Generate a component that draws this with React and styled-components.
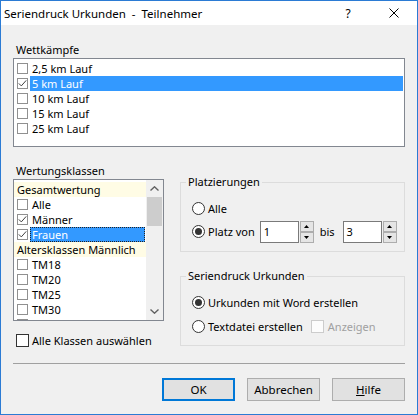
import React from 'react'
import styled, { createGlobalStyle } from 'styled-components'

const GlobalStyle = createGlobalStyle`
  html, body {
    margin: 0;
    padding: 0;
    background: #f0f0f0;
  }
  body {
    font-family: "Noto Sans", "Liberation Sans", sans-serif;
    font-size: 11px;
    color: #000;
  }
`

const wettkaempfe = [
  { label: '2,5 km Lauf' },
  { label: '5 km Lauf', checked: true, selected: true },
  { label: '10 km Lauf' },
  { label: '15 km Lauf' },
  { label: '25 km Lauf' },
]

const klassen = [
  { label: 'Gesamtwertung', header: true },
  { label: 'Alle' },
  { label: 'Männer', checked: true },
  { label: 'Frauen', checked: true, selected: true },
  { label: 'Altersklassen Männlich', header: true },
  { label: 'TM18' },
  { label: 'TM20' },
  { label: 'TM25' },
  { label: 'TM30' },
  { label: 'TM35' },
]

function ListCheck({ checked }) {
  return (
    <CheckIcon width="11" height="11" viewBox="0 0 11 11">
      <rect x="0.5" y="0.5" width="10" height="10" fill="#fff" stroke="#909090" />
      {checked && <path d="M1.8 5.4 L4.3 7.9 L9.2 2.4" fill="none" stroke="#404040" strokeWidth="1" />}
    </CheckIcon>
  )
}

function Radio({ checked }) {
  return (
    <RadioIcon width="13" height="13" viewBox="0 0 13 13">
      <circle cx="6.5" cy="6.5" r="6" fill="#fff" stroke="#333" />
      {checked && <circle cx="6.5" cy="6.5" r="3.5" fill="#333" />}
    </RadioIcon>
  )
}

function Spin({ value }) {
  return (
    <SpinWrap>
      <SpinInput>{value}</SpinInput>
      <SpinButtons>
        <SpinButton>
          <svg width="5" height="3" viewBox="0 0 5 3"><path d="M0 3 L2.5 0 L5 3 Z" fill="#000" /></svg>
        </SpinButton>
        <SpinButton>
          <svg width="5" height="3" viewBox="0 0 5 3"><path d="M0 0 L2.5 3 L5 0 Z" fill="#000" /></svg>
        </SpinButton>
      </SpinButtons>
    </SpinWrap>
  )
}

export default function App() {
  return (
    <>
      <GlobalStyle />
      <Window>
        <TitleBar>
          <Title>Seriendruck Urkunden  -  Teilnehmer</Title>
          <CaptionButton>?</CaptionButton>
          <CaptionButton>
            <svg width="10" height="10" viewBox="0 0 10 10">
              <path d="M0.5 0.5 L9.5 9.5 M9.5 0.5 L0.5 9.5" stroke="#000" strokeWidth="1" />
            </svg>
          </CaptionButton>
        </TitleBar>

        <Content>
          <SectionLabel>Wettkämpfe</SectionLabel>
          <ListBox $height={89}>
            {wettkaempfe.map((item) => (
              <Row key={item.label}>
                <ListCheck checked={item.checked} />
                <ItemText $selected={item.selected}>{item.label}</ItemText>
              </Row>
            ))}
          </ListBox>

          <Lower>
            <LeftColumn>
              <SectionLabel>Wertungsklassen</SectionLabel>
              <ListBox $height={142} $scroll>
                <ListItems>
                  {klassen.map((item) =>
                    item.header ? (
                      <HeaderRow key={item.label}>{item.label}</HeaderRow>
                    ) : (
                      <Row key={item.label}>
                        <ListCheck checked={item.checked} />
                        <ItemText $selected={item.selected} $focus={item.selected}>
                          {item.label}
                        </ItemText>
                      </Row>
                    )
                  )}
                </ListItems>
                <ScrollBar>
                  <ScrollArrow>
                    <svg width="9" height="5" viewBox="0 0 9 5">
                      <path d="M0.5 4.5 L4.5 0.8 L8.5 4.5" fill="none" stroke="#606060" strokeWidth="1.4" />
                    </svg>
                  </ScrollArrow>
                  <ScrollTrack>
                    <Thumb />
                  </ScrollTrack>
                  <ScrollArrow>
                    <svg width="9" height="5" viewBox="0 0 9 5">
                      <path d="M0.5 0.5 L4.5 4.2 L8.5 0.5" fill="none" stroke="#606060" strokeWidth="1.4" />
                    </svg>
                  </ScrollArrow>
                </ScrollBar>
              </ListBox>
              <CheckRow>
                <Box />
                <span>Alle Klassen auswählen</span>
              </CheckRow>
            </LeftColumn>

            <RightColumn>
              <Group $padTop={6} $padBottom={8}>
                <Legend>Platzierungen</Legend>
                <OptionRow $height={23}>
                  <Radio />
                  <OptionText>Alle</OptionText>
                </OptionRow>
                <OptionRow $height={23}>
                  <Radio checked />
                  <OptionText>Platz von</OptionText>
                  <Spin value="1" />
                  <BisText>bis</BisText>
                  <Spin value="3" />
                </OptionRow>
              </Group>

              <Group $padTop={5} $padBottom={7} $gap={16}>
                <Legend>Seriendruck Urkunden</Legend>
                <OptionRow $height={24}>
                  <Radio checked />
                  <OptionText>Urkunden mit Word erstellen</OptionText>
                </OptionRow>
                <OptionRow $height={24}>
                  <Radio />
                  <OptionText>Textdatei erstellen</OptionText>
                  <Box $disabled />
                  <DisabledText>Anzeigen</DisabledText>
                </OptionRow>
              </Group>
            </RightColumn>
          </Lower>

          <Footer>
            <Separator />
            <Buttons>
              <Button $default>OK</Button>
              <Button>Abbrechen</Button>
              <Button><u>H</u>ilfe</Button>
            </Buttons>
          </Footer>
        </Content>
      </Window>
    </>
  )
}

const Window = styled.div`
  width: 418px;
  height: 415px;
  box-sizing: border-box;
  border: 1px solid #2b7bd4;
  background: #f0f0f0;
  display: flex;
  flex-direction: column;
`

const TitleBar = styled.div`
  height: 24px;
  flex: none;
  display: flex;
  align-items: center;
  background: #fff;
  padding-left: 3px;
`

const Title = styled.div`
  flex: 1;
  white-space: pre;
  line-height: 15px;
  font-size: 11.5px;
`

const CaptionButton = styled.div`
  width: 46px;
  height: 24px;
  display: flex;
  align-items: center;
  justify-content: center;
  font-size: 12px;
`

const Content = styled.div`
  flex: 1;
  display: flex;
  flex-direction: column;
  padding: 17px 12px 13px;
`

const SectionLabel = styled.div`
  line-height: 15px;
  height: 15px;
  padding-left: 3px;
  margin-bottom: 1px;
`

const ListBox = styled.div`
  height: ${(p) => p.$height}px;
  box-sizing: border-box;
  border: 1px solid #828790;
  background: #fff;
  padding-top: ${(p) => (p.$scroll ? 0 : 2)}px;
  display: ${(p) => (p.$scroll ? 'flex' : 'block')};
  overflow: hidden;
`

const ListItems = styled.div`
  flex: 1;
  padding-top: 2px;
  overflow: hidden;
`

const Row = styled.div`
  display: flex;
  align-items: center;
  height: 15px;
  padding-left: 3px;
  padding-right: 1px;
`

const HeaderRow = styled.div`
  height: 15px;
  line-height: 15px;
  padding-left: 3px;
  background: #fffce5;
  white-space: nowrap;
`

const CheckIcon = styled.svg`
  flex: none;
  display: block;
`

const ItemText = styled.span`
  flex: 1;
  height: 15px;
  line-height: 15px;
  margin-left: 2px;
  padding-left: 2px;
  white-space: nowrap;
  background: ${(p) => (p.$selected ? '#3399ff' : 'transparent')};
  color: ${(p) => (p.$selected ? '#fff' : '#000')};
  outline: ${(p) => (p.$focus ? '1px dotted #222' : 'none')};
  outline-offset: -1px;
`

const ScrollBar = styled.div`
  width: 17px;
  flex: none;
  display: flex;
  flex-direction: column;
  background: #f0f0f0;
`

const ScrollArrow = styled.div`
  height: 17px;
  display: flex;
  align-items: center;
  justify-content: center;
`

const ScrollTrack = styled.div`
  flex: 1;
  padding: 0 1px;
`

const Thumb = styled.div`
  height: 29px;
  background: #cdcdcd;
`

const Lower = styled.div`
  display: flex;
  gap: 16px;
  margin-top: 16px;
`

const LeftColumn = styled.div`
  width: 151px;
  display: flex;
  flex-direction: column;
`

const CheckRow = styled.div`
  display: flex;
  align-items: center;
  margin-top: 12px;
  padding-left: 3px;
  gap: 3px;
  line-height: 15px;
`

const Box = styled.span`
  width: 13px;
  height: 13px;
  box-sizing: border-box;
  border: 1px solid ${(p) => (p.$disabled ? '#cccccc' : '#333')};
  background: ${(p) => (p.$disabled ? '#fcfcfc' : '#fff')};
  flex: none;
  margin-left: ${(p) => (p.$disabled ? 8 : 0)}px;
`

const RightColumn = styled.div`
  flex: 1;
  margin-top: 11px;
  display: flex;
  flex-direction: column;
`

const Group = styled.fieldset`
  margin: ${(p) => p.$gap || 0}px 0 0;
  padding: ${(p) => p.$padTop}px 0 ${(p) => p.$padBottom}px 11px;
  border: 1px solid #dcdcdc;
  min-width: 0;
`

const Legend = styled.legend`
  margin-left: -6px;
  padding: 0 2px 2px;
  line-height: 15px;
`

const OptionRow = styled.div`
  display: flex;
  align-items: center;
  height: ${(p) => p.$height}px;
`

const RadioIcon = styled.svg`
  flex: none;
  display: block;
`

const OptionText = styled.span`
  margin-left: 3px;
  line-height: 15px;
  white-space: nowrap;
`

const BisText = styled.span`
  margin-left: 6px;
  margin-right: 3px;
  line-height: 15px;
`

const DisabledText = styled.span`
  margin-left: 4px;
  color: #a0a0a0;
  line-height: 15px;
`

const SpinWrap = styled.div`
  display: flex;
  gap: 1px;
  margin-left: 5px;
  height: 22px;
`

const SpinInput = styled.div`
  width: 39px;
  box-sizing: border-box;
  border: 1px solid #7a7a7a;
  background: #fff;
  padding-left: 3px;
  line-height: 20px;
`

const SpinButtons = styled.div`
  width: 14px;
  display: flex;
  flex-direction: column;
`

const SpinButton = styled.div`
  flex: 1;
  box-sizing: border-box;
  border: 1px solid #adadad;
  background: #e5e5e5;
  display: flex;
  align-items: center;
  justify-content: center;
`

const Footer = styled.div`
  margin-top: auto;
`

const Separator = styled.div`
  height: 1px;
  background: #a0a0a0;
`

const Buttons = styled.div`
  display: flex;
  justify-content: flex-end;
  gap: 12px;
  margin-top: 14px;
`

const Button = styled.div`
  width: 73px;
  height: 23px;
  box-sizing: border-box;
  border: ${(p) => (p.$default ? '2px solid #0078d7' : '1px solid #adadad')};
  background: #e1e1e1;
  display: flex;
  align-items: center;
  justify-content: center;
  font-size: 11.5px;
`
